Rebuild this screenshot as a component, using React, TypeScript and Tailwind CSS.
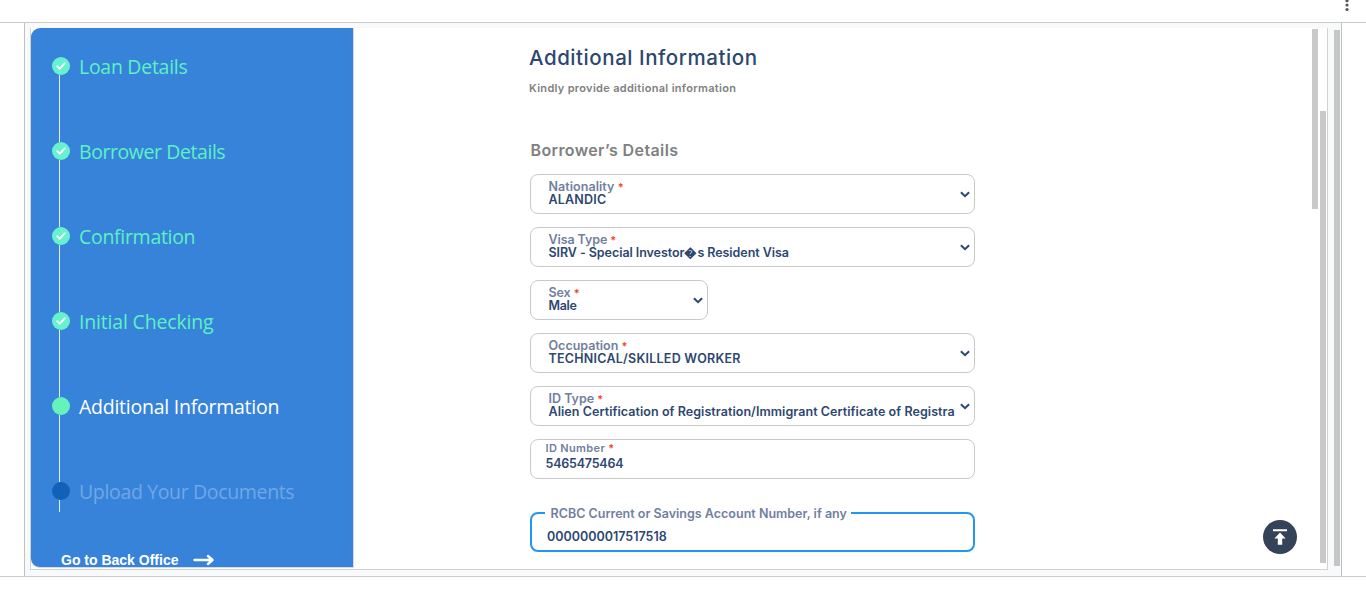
import React from "react";

type Step = { label: string; state: "done" | "current" | "todo"; tracking: string };

const steps: Step[] = [
  { label: "Loan Details", state: "done", tracking: "tracking-[-0.28px]" },
  { label: "Borrower Details", state: "done", tracking: "tracking-[-0.43px]" },
  { label: "Confirmation", state: "done", tracking: "tracking-[-0.3px]" },
  { label: "Initial Checking", state: "done", tracking: "tracking-[-0.18px]" },
  { label: "Additional Information", state: "current", tracking: "tracking-[-0.25px]" },
  { label: "Upload Your Documents", state: "todo", tracking: "tracking-[-0.35px]" },
];

const dotColor = { done: "bg-[#66f2cf]", current: "bg-[#66f2bb]", todo: "bg-[#1260b8]" };
const textColor = { done: "text-[#5cf2c2]", current: "text-white", todo: "text-[#70a7e6]" };

function StepRow({ step, last }: { step: Step; last: boolean }) {
  return (
    <li className="flex">
      <div className="flex w-[18px] flex-col">
        <span className={`flex size-[18px] items-center justify-center rounded-full ${dotColor[step.state]}`}>
          {step.state === "done" && (
            <svg width="12" height="10" viewBox="0 0 12 10" fill="none" stroke="white" strokeWidth="2">
              <path d="M1.6 4.6 4.7 7.6 10.4 1.7" />
            </svg>
          )}
        </span>
        <span className={`ml-[7px] w-px bg-[#e3eefb] ${last ? "h-3" : "h-[67px]"}`} />
      </div>
      <span
        className={`ml-[9px] h-5 whitespace-nowrap font-['Open_Sans','Noto_Sans',sans-serif] text-[19.5px] leading-[19px] font-normal ${step.tracking} ${textColor[step.state]}`}
      >
        {step.label}
      </span>
    </li>
  );
}

function Chevron() {
  return (
    <svg className="shrink-0" width="10" height="7" viewBox="0 0 10 7" fill="none" stroke="#2d4770" strokeWidth="2">
      <path d="M0.9 1.2 5 5.2 9.1 1.2" />
    </svg>
  );
}

function Required() {
  return <span className="text-[11px] tracking-normal text-[#f44336]">*</span>;
}

type SelectProps = { label: string; value: string; width: string; lt: string; vt: string };

function SelectField({ label, value, width, lt, vt }: SelectProps) {
  return (
    <div className={`flex h-10 items-center rounded-[8px] border border-[#c9c9c9] pr-1 pl-[17.5px] ${width}`}>
      <div className="min-w-0 flex-1 pb-[2px]">
        <div className={`h-[13px] text-[12.5px] leading-[13px] whitespace-nowrap text-[#71809f] ${lt}`}>
          {label} <Required />
        </div>
        <div className={`h-[13px] text-[12.5px] leading-[13px] whitespace-nowrap text-[#2d4770] ${vt}`}>{value}</div>
      </div>
      <Chevron />
    </div>
  );
}

export default function App() {
  return (
    <div className="flex h-[589px] w-[1366px] flex-col overflow-hidden bg-white font-['Inter','Liberation_Sans',sans-serif] font-semibold">
      <header className="flex h-[23px] shrink-0 justify-end border-b border-[#c9c9c9] pr-[17px]">
        <svg width="4" height="12" viewBox="0 0 4 12" fill="#555">
          <circle cx="2" cy="0.7" r="1.6" />
          <circle cx="2" cy="5" r="1.6" />
          <circle cx="2" cy="9.5" r="1.6" />
        </svg>
      </header>
      <div className="h-[554px] shrink-0 border-b border-[#cacaca] pr-6 pl-6">
        <div className="flex h-full border-x border-[#c2c2c2] bg-[#f8f9fb] pt-[5px] pl-[5px]">
          <div className="flex h-[542px] w-[1298px] border-x border-b border-[#d2d2d2] bg-white">
            <aside className="h-[540px] w-[323px] shrink-0 overflow-hidden rounded-l-[9px] border-r border-b border-[#d3dbe6] bg-[#3783da] pt-[29px] pl-[21px]">
              <ol>
                {steps.map((s, i) => (
                  <StepRow key={s.label} step={s} last={i === steps.length - 1} />
                ))}
              </ol>
              <a className="mt-[40px] ml-[9px] flex h-[16px] items-center font-['Liberation_Sans',sans-serif] text-[14px] leading-[16px] font-bold text-white">
                Go to Back Office
                <svg className="ml-[15px]" width="21" height="12" viewBox="0 0 21 12" fill="none" stroke="white" strokeWidth="2.4" strokeLinecap="round" strokeLinejoin="round">
                  <path d="M1.5 6H19.5M15 2 19.5 6 15 10" />
                </svg>
              </a>
            </aside>
            <main className="flex flex-1 flex-col pt-[18px] pl-[175px]">
              <h1 className="h-6 text-[20.5px] leading-6 font-medium tracking-[0.55px] whitespace-nowrap text-[#2d4770]">
                Additional Information
              </h1>
              <p className="mt-[10px] h-4 text-[11px] leading-4 tracking-[0.31px] whitespace-nowrap text-[#808080]">
                Kindly provide additional information
              </p>
              <h2 className="mt-[44px] ml-[1.5px] h-5 text-[16px] leading-5 font-semibold tracking-[0.38px] text-[#808080]">
                Borrower’s Details
              </h2>
              <form className="mt-[14px] ml-px flex flex-col gap-[13px]">
                <SelectField label="Nationality" value="ALANDIC" width="w-[445px]" lt="tracking-[0.05px]" vt="tracking-[0.2px]" />
                <SelectField label="Visa Type" value="SIRV - Special Investor�s Resident Visa" width="w-[445px]" lt="tracking-[-0.1px]" vt="tracking-[-0.06px]" />
                <SelectField label="Sex" value="Male" width="w-[178px]" lt="tracking-[-0.1px]" vt="tracking-[-0.3px]" />
                <SelectField label="Occupation" value="TECHNICAL/SKILLED WORKER" width="w-[445px]" lt="tracking-[0px]" vt="tracking-[0.25px]" />
                <SelectField label="ID Type" value="Alien Certification of Registration/Immigrant Certificate of Registra" width="w-[445px]" lt="tracking-[0px]" vt="tracking-[0.06px]" />
                <div className="h-10 w-[445px] rounded-[8px] border border-[#c9c9c9] pt-[2px] pl-[14.5px]">
                  <div className="h-[13px] text-[11px] leading-[13px] tracking-[0.35px] text-[#71809f]">
                    ID Number <Required />
                  </div>
                  <div className="mt-[2px] h-[14px] text-[12.5px] leading-[14px] tracking-[-0.22px] text-[#2d4770]">5465475464</div>
                </div>
                <fieldset className="mt-[14px] h-[46px] w-[445px] rounded-[8px] border-2 border-[#2196f3] pl-[13px]">
                  <legend className="h-[13px] w-[306px] pl-[5.5px] text-[12.5px] leading-[15px] tracking-[0.01px] whitespace-nowrap text-[#71809f]">
                    RCBC Current or Savings Account Number, if any
                  </legend>
                  <div className="mt-[11px] ml-[2px] h-[14px] text-[12.5px] leading-[14px] tracking-[0px] text-[#2d4770]">0000000017517518</div>
                </fieldset>
              </form>
            </main>
            <div className="flex w-[66px] shrink-0 flex-col items-start justify-end pb-[15px]">
              <button className="flex size-[34px] items-center justify-center rounded-full bg-[#344357]">
                <svg width="16" height="18" viewBox="0 0 16 18" fill="white">
                  <path d="M1 1.2h14v2H1zM8 4.6l5.6 5.9h-3.4v6.3H5.8v-6.3H2.4z" />
                </svg>
              </button>
            </div>
            <div className="-ml-[17px] mr-[2px] w-[6px] shrink-0 pt-px">
              <div className="h-[180px] bg-[#c9c9c9]" />
            </div>
            <div className="mr-px w-[6px] shrink-0 pt-[83px]">
              <div className="h-[452px] bg-[#c9c9c9]" />
            </div>
          </div>
          <div className="ml-[6px] h-[538px] w-[6px] self-start pt-[2px]">
            <div className="h-[536px] bg-[#c6c6c6]" />
          </div>
        </div>
      </div>
    </div>
  );
}
